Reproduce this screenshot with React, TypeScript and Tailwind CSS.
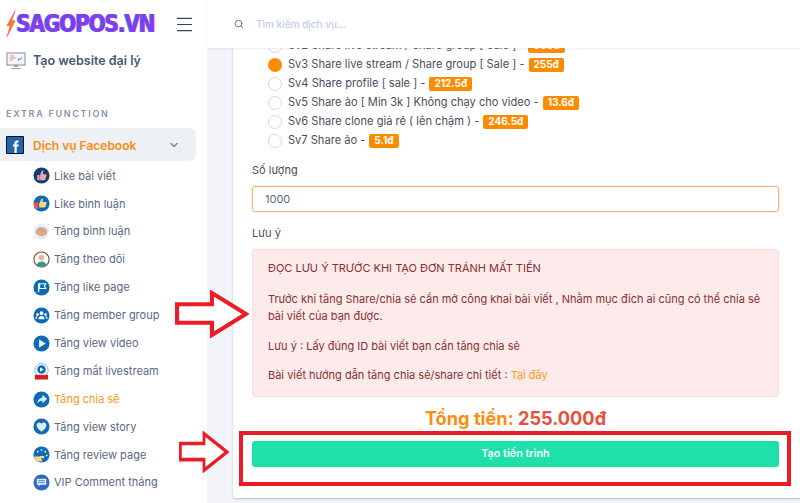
import { Menu, Search, ChevronDown } from 'lucide-react';
import type { ReactNode } from 'react';

const font = "font-['Inter','Noto_Sans',sans-serif]";

// small round menu icons
const Disc = ({ bg = '#0b6bb5', children }: { bg?: string; children?: ReactNode }) => (
  <svg viewBox="0 0 18 18" className="w-[17px] h-[17px] shrink-0">
    <circle cx="9" cy="9" r="8.5" fill={bg} />
    {children}
  </svg>
);

const icons: Record<string, ReactNode> = {
  like: (
    <Disc bg="#123f78">
      <path d="M4.500 8.500h2.500v5.500H4.500zM7.500 8.500 9.500 3.500c1.200 0 1.600.9 1.300 2.200l-.4 2h3c.7 0 1 .6.8 1.200l-1.100 4.200c-.1.500-.5.900-1 .9H7.500z" fill="#f3a6a6" />
    </Disc>
  ),
  likeCmt: (
    <Disc>
      <path d="M0.500 8h5v6.500h-4z" fill="#ef5350" />
      <path d="M6.500 9 9.500 3.500c1 0 1.300.8 1 2l-.3 2h3.300c.7 0 1 .6.8 1.200l-1 3.800c-.1.500-.5.800-1 .8H6.500z" fill="#f7d774" />
    </Disc>
  ),
  brain: (
    <svg viewBox="0 0 18 18" className="w-[17px] h-[17px] shrink-0">
      <circle cx="9" cy="9" r="8" fill="#e8e8f8" />
      <path d="M3.500 9.500c0-2.800 2.300-4.500 5.500-4.500s5.500 1.700 5.500 4.500-2.200 3-4 3l-1.500 1.500-1-1.500c-2.500 0-4.500-.5-4.500-3z" fill="#e2a98c" stroke="#b77a60" strokeWidth=".6" />
      <path d="M6 8c1-1 2-1 3 0s2 1 3 0" stroke="#b77a60" strokeWidth=".6" fill="none" />
      <circle cx="16" cy="2" r=".7" fill="#f2b632" />
      <circle cx="2" cy="15" r=".7" fill="#f2b632" />
    </svg>
  ),
  user: (
    <svg viewBox="0 0 18 18" className="w-[17px] h-[17px] shrink-0">
      <circle cx="9" cy="9" r="8" fill="#fff" stroke="#7a4a34" strokeWidth="1.200" />
      <circle cx="9" cy="7" r="3" fill="#e9b48f" />
      <path d="M4 15c.5-3 2.500-4 5-4s4.500 1 5 4c-1.500 1.200-3 1.600-5 1.600S5.500 16.200 4 15z" fill="#2f9c83" />
    </svg>
  ),
  flag: (
    <Disc>
      <path d="M6 4.500v9.500" stroke="#fff" strokeWidth="1.300" />
      <path d="M7 5h6.500l-1.500 2.500 1.500 2.500H7z" fill="none" stroke="#fff" strokeWidth="1.200" />
    </Disc>
  ),
  group: (
    <Disc>
      <circle cx="9" cy="6.500" r="2" fill="#fff" />
      <circle cx="4.700" cy="8" r="1.400" fill="#fff" />
      <circle cx="13.300" cy="8" r="1.400" fill="#fff" />
      <path d="M5.800 13c0-2.400 1.400-3.500 3.200-3.500s3.200 1.100 3.200 3.500zM2.500 12.500c0-1.800.8-2.800 2-2.800l.4.300c-.5.700-.8 1.500-.8 2.500zM15.500 12.500c0-1.800-.8-2.800-2-2.800l-.4.300c.5.700.8 1.500.8 2.500z" fill="#fff" />
    </Disc>
  ),
  play: (
    <Disc>
      <path d="M6.500 4.800 13.500 9l-7 4.200z" fill="#fff" />
    </Disc>
  ),
  live: (
    <svg viewBox="0 0 18 18" className="w-[17px] h-[17px] shrink-0">
      <circle cx="9" cy="7.500" r="7" fill="#fff" stroke="#7db5dc" strokeWidth="1" />
      <circle cx="9" cy="7" r="4.500" fill="#0b6bb5" />
      <path d="M7.500 4.800 11.500 7l-4 2.200z" fill="#fff" />
      <rect x="2" y="12.500" width="14" height="5" fill="#d81f26" />
    </svg>
  ),
  share: (
    <Disc>
      <path d="M10 4 15 8.500 10 13v-2.800c-2.500 0-4 .8-5.500 3 .3-3.500 2-6 5.500-6.400z" fill="#dfeaf5" />
    </Disc>
  ),
  heart: (
    <Disc>
      <path d="M9 14.500C5.800 12 3.800 10 3.800 7.700 3.800 6 5.200 4.800 6.600 4.800 7.600 4.800 8.500 5.300 9 6.300 9.500 5.300 10.400 4.800 11.400 4.800 12.800 4.800 14.200 6 14.200 7.700 14.200 10 12.200 12 9 14.500z" fill="#dfeaf5" />
    </Disc>
  ),
  review: (
    <Disc>
      <path d="M1 11h7l2 5.500H3.500z" fill="#f7d774" />
      <path d="M7 10.500h4.500c.7 0 .7 2.500 0 2.500H7z" fill="#f2cfa8" />
      <circle cx="5" cy="6" r=".9" fill="#fff" />
      <circle cx="9" cy="4" r=".9" fill="#fff" />
      <circle cx="13" cy="6" r=".9" fill="#fff" />
      <circle cx="14.500" cy="10" r=".9" fill="#fff" />
    </Disc>
  ),
  vip: (
    <Disc bg="#2f69c0">
      <path d="M4 5h10v6.500H8l-2 2v-2H4z" fill="#dcecff" />
      <path d="M5.500 7h7M5.500 9h7" stroke="#2f69c0" strokeWidth=".8" />
    </Disc>
  ),
};

const menu = [
  { key: 'like', label: 'Like bài viết' },
  { key: 'likeCmt', label: 'Like bình luận' },
  { key: 'brain', label: 'Tăng bình luận' },
  { key: 'user', label: 'Tăng theo dõi' },
  { key: 'flag', label: 'Tăng like page' },
  { key: 'group', label: 'Tăng member group' },
  { key: 'play', label: 'Tăng view video' },
  { key: 'live', label: 'Tăng mắt livestream' },
  { key: 'share', label: 'Tăng chia sẽ', active: true },
  { key: 'heart', label: 'Tăng view story' },
  { key: 'review', label: 'Tăng review page' },
  { key: 'vip', label: 'VIP Comment tháng' },
];

const services = [
  { label: 'Sv2 Share live stream / Share group [ Sale ] -', price: '300đ' },
  { label: 'Sv3 Share live stream / Share group [ Sale ] -', price: '255đ', checked: true },
  { label: 'Sv4 Share profile [ sale ] -', price: '212.5đ' },
  { label: 'Sv5 Share ảo [ Min 3k ] Không chạy cho video -', price: '13.6đ' },
  { label: 'Sv6 Share clone giá rẻ ( lên chậm ) -', price: '246.5đ' },
  { label: 'Sv7 Share ảo -', price: '5.1đ' },
];

function Arrow({ className }: { className: string }) {
  return (
    <svg viewBox="0 0 72 47" preserveAspectRatio="none" className={className}>
      <path d="M2 14h34V3l33 20.500L36 44V32H2z" fill="#fff" stroke="#ed1c24" strokeWidth="4" strokeLinejoin="miter" />
    </svg>
  );
}

function Sidebar() {
  return (
    <aside className="w-[207px] shrink-0 h-full bg-white overflow-hidden">
      <div className="h-12 flex items-center pl-[6px] pr-[12px] justify-between">
        <div className="flex items-center">
          <svg viewBox="0 0 12 32" className="w-[10px] h-[32px] shrink-0">
            <path d="M11 0 1 18h4L1 32 11 12H7z" fill="#f5811f" stroke="#e53935" strokeWidth=".5" />
          </svg>
          <span className="inline-block scale-y-[1.2] font-['DejaVu_Sans',sans-serif] font-bold text-[#7a3ff0] text-[20px] leading-none tracking-[-1.1px] [text-shadow:1px_0_0_#f03fe0,-1px_0_0_#45d8f5]">
            SAGOPOS.VN
          </span>
        </div>
        <Menu className="w-[21px] h-[21px] text-[#33415c]" strokeWidth={1.3} />
      </div>

      <div className="flex items-center gap-[7px] pl-[6px] h-6 mt-[1px]">
        <svg viewBox="0 0 20 18" className="w-5 h-[18px] shrink-0">
          <rect x="1" y="1" width="18" height="12" fill="#f4f6fa" stroke="#7f8c9c" strokeWidth="1" />
          <path d="M4 4h4M4 6h6M4 8h3" stroke="#e58a9a" strokeWidth="1" />
          <path d="M12 9l1-3 1 2 2-3" stroke="#7aa7d0" strokeWidth="1" fill="none" />
          <path d="M8 13h4v2H8zM5 16h10v1H5z" fill="#9aa6b5" />
        </svg>
        <span className="text-[12.5px] font-semibold text-[#4a5874]">Tạo website đại lý</span>
      </div>

      <div className="mt-[35px] pl-[6px] text-[9px] font-semibold tracking-[1.7px] text-[#8593ab] leading-3">EXTRA FUNCTION</div>

      <div className="mt-[8px] w-[196px] h-[33px] bg-[#edf0f5] rounded-r-md flex items-center pl-[6px] pr-[16px]">
        <svg viewBox="0 0 18 18" className="w-[18px] h-[18px] shrink-0">
          <rect width="18" height="18" fill="#111" rx="1" />
          <rect x="1" y="1" width="16" height="16" fill="#1f66ad" />
          <path d="M12.500 4.500h-1.700c-1.500 0-2.300 1-2.300 2.500v1.500H7v2h1.500V17h2.200v-6.500h1.800l.3-2h-2.100V7.300c0-.6.200-.9.900-.9h.9z" fill="#fff" />
        </svg>
        <span className="ml-[9px] flex-1 text-[12px] font-semibold text-[#fb8c12] pt-[2px]">Dịch vụ Facebook</span>
        <ChevronDown className="w-3 h-3 text-[#6b7a90]" strokeWidth={2.2} />
      </div>

      <ul className="mt-[1px] pl-[33px]">
        {menu.map((m) => (
          <li key={m.key} className="h-[27.9px] flex items-center gap-[4px]">
            {icons[m.key]}
            <span className={`text-[11px] ${m.active ? 'text-[#fb9a1a]' : 'text-[#5a6881]'}`}>{m.label}</span>
          </li>
        ))}
      </ul>
    </aside>
  );
}

export default function App() {
  return (
    <div className={`relative w-[800px] h-[503px] overflow-hidden flex bg-[#f3f4f9] ${font}`}>
      <Sidebar />

      <div className="flex-1 min-w-0 flex flex-col h-full">
        <header className="relative z-10 h-12 shrink-0 bg-white flex items-center pl-[27px] gap-3 shadow-[0_1px_2px_rgba(120,130,160,0.15)]">
          <Search className="w-[10px] h-[10px] text-[#5d6b85]" strokeWidth={2.2} />
          <span className="text-[10px] font-medium text-[#c2cee6]">Tìm kiếm dịch vụ...</span>
        </header>

        <div className="flex-1 min-h-0 pl-[26px]">
          <section className="-mt-[12px] w-[570px] h-[462px] bg-white rounded-[3px] shadow-[0_1px_2px_rgba(110,120,150,0.45)] pl-[19px] pr-[24px]">
            <ul className="pl-[16px]">
              {services.map((s) => (
                <li key={s.price} className="h-[19px] flex items-center text-[11.1px] text-[#4d4d5c]">
                  {s.checked ? (
                    <span className="w-[14px] h-[14px] rounded-full bg-[#fb8c00] shrink-0" />
                  ) : (
                    <span className="w-[14px] h-[14px] rounded-full bg-white border border-[#d5d9e6] shrink-0" />
                  )}
                  <span className="ml-[6px]">{s.label}</span>
                  <span className="ml-[4px] px-[5px] h-[14px] flex items-center rounded-[2px] bg-[#fb8c00] text-white text-[10px] font-bold">
                    {s.price}
                  </span>
                </li>
              ))}
            </ul>

            <div className="mt-[12px] text-[11px] leading-4 text-[#4d4d5c]">Số lượng</div>
            <div className="mt-[8px] h-[26px] border border-[#f5b65f] rounded-[3px] flex items-center pl-[12px] text-[11px] text-[#5a6881] shadow-[0_0_0_1px_#f0f1fb]">
              1000
            </div>

            <div className="mt-[13px] text-[11px] leading-4 text-[#4d4d5c]">Lưu ý</div>
            <div className="mt-[8px] h-[148px] border border-[#fbdcdc] bg-[#fcebea] rounded-[3px] pl-[15px] pt-[10px] pr-4 text-[11px] text-[#8a2f33] leading-[17px]">
              <p>ĐỌC LƯU Ý TRƯỚC KHI TẠO ĐƠN TRÁNH MẤT TIỀN</p>
              <p className="mt-[14px]">
                Trước khi tăng Share/chia sẻ cần mở công khai bài viết , Nhằm mục đích ai cũng có thể chia sẻ bài viết của bạn được.
              </p>
              <p className="mt-[13px]">Lưu ý : Lấy đúng ID bài viết bạn cần tăng chia sẻ</p>
              <p className="mt-[12px]">
                Bài viết hướng dẫn tăng chia sẻ/share chi tiết : <span className="text-[#fb9a1a]">Tại đây</span>
              </p>
            </div>

            <div className="mt-[9px] text-center text-[18.200px] leading-[24px] font-bold">
              <span className="text-[#fb8c12]">Tổng tiền: </span>
              <span className="text-[#e8503a]">255.000đ</span>
            </div>

            <button className="mt-[11px] w-full h-[26px] bg-[#1de0ab] rounded-[3px] text-white text-[10.8px] font-semibold">
              Tạo tiến trình
            </button>
          </section>
        </div>
      </div>

      {/* red annotations drawn over the page */}
      <Arrow className="absolute left-[175px] top-[290px] w-[74px] h-[48px]" />
      <Arrow className="absolute left-[179px] top-[431px] w-[50px] h-[42px]" />
      <div className="absolute left-[239px] top-[431px] w-[552px] h-[55px] border-4 border-[#ed1c24]" />
    </div>
  );
}
